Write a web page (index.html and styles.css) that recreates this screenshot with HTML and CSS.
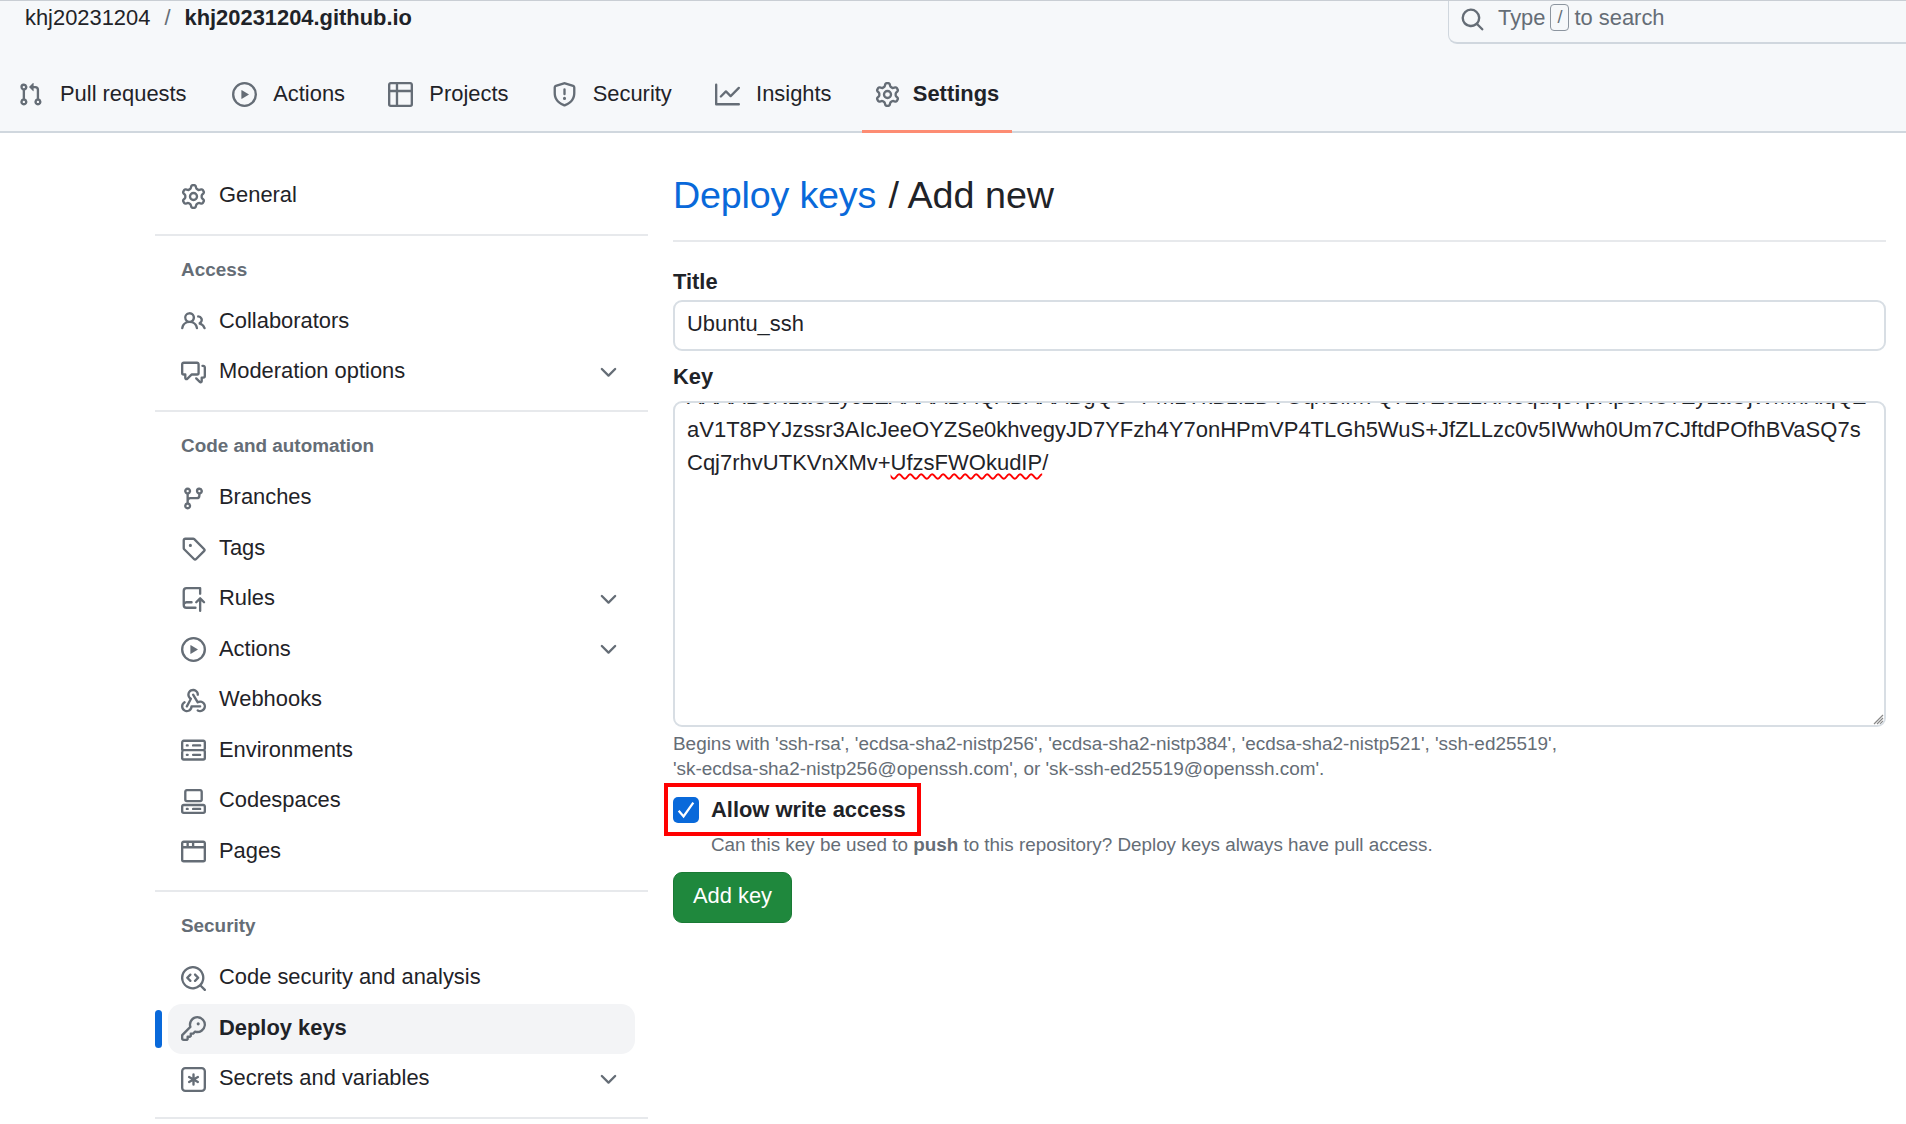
FILE: index.html
```html
<!DOCTYPE html>
<html lang="en">
<head>
    <meta charset="UTF-8">
    <meta name="viewport" content="width=device-width, initial-scale=1.0">
    <title>Add new deploy key</title>
    <link rel="stylesheet" href="styles.css">
</head>
<body>
    <svg class="defs" aria-hidden="true">
        <symbol id="i-gear" viewBox="0 0 16 16"><path d="M8 0a8.2 8.2 0 0 1 .701.031C9.444.095 9.99.645 10.16 1.29l.288 1.107c.018.066.079.158.212.224.231.114.454.243.668.386.123.082.233.09.299.071l1.103-.303c.644-.176 1.392.021 1.82.63.27.385.506.792.704 1.218.315.675.111 1.422-.364 1.891l-.814.806c-.049.048-.098.147-.088.294.016.257.016.515 0 .772-.01.147.038.246.088.294l.814.806c.475.469.679 1.216.364 1.891a7.977 7.977 0 0 1-.704 1.217c-.428.61-1.176.807-1.82.63l-1.102-.302c-.067-.019-.177-.011-.3.071a5.909 5.909 0 0 1-.668.386c-.133.066-.194.158-.211.224l-.29 1.106c-.168.646-.715 1.196-1.458 1.26a8.006 8.006 0 0 1-1.402 0c-.743-.064-1.289-.614-1.458-1.26l-.289-1.106c-.018-.066-.079-.158-.212-.224a5.738 5.738 0 0 1-.668-.386c-.123-.082-.233-.09-.299-.071l-1.103.303c-.644.176-1.392-.021-1.82-.63a8.12 8.12 0 0 1-.704-1.218c-.315-.675-.111-1.422.363-1.891l.815-.806c.05-.048.098-.147.088-.294a6.214 6.214 0 0 1 0-.772c.01-.147-.038-.246-.088-.294l-.815-.806C.635 6.045.431 5.298.746 4.623a7.92 7.92 0 0 1 .704-1.217c.428-.61 1.176-.807 1.82-.63l1.102.302c.067.019.177.011.3-.071.214-.143.437-.272.668-.386.133-.066.194-.158.211-.224l.29-1.106C6.009.645 6.556.095 7.299.03 7.53.01 7.764 0 8 0Zm-.571 1.525c-.036.003-.108.036-.137.146l-.289 1.105c-.147.561-.549.967-.998 1.189-.173.086-.34.183-.5.29-.417.278-.97.423-1.529.27l-1.103-.303c-.109-.03-.175.016-.195.045-.22.312-.412.644-.573.99-.014.031-.021.11.059.19l.815.806c.411.406.562.957.53 1.456a4.709 4.709 0 0 0 0 .582c.032.499-.119 1.05-.53 1.456l-.815.806c-.081.08-.073.159-.059.19.162.346.353.677.573.989.02.03.085.076.195.046l1.102-.303c.56-.153 1.113-.008 1.53.27.161.107.328.204.501.29.447.222.85.629.997 1.189l.289 1.105c.029.109.101.143.137.146a6.6 6.6 0 0 0 1.142 0c.036-.003.108-.036.137-.146l.289-1.105c.147-.561.549-.967.998-1.189.173-.086.34-.183.5-.29.417-.278.97-.423 1.529-.27l1.103.303c.109.029.175-.016.195-.045.22-.313.411-.644.573-.99.014-.031.021-.11-.059-.19l-.815-.806c-.411-.406-.562-.957-.53-1.456a4.709 4.709 0 0 0 0-.582c-.032-.499.119-1.05.53-1.456l.815-.806c.081-.08.073-.159.059-.19a6.464 6.464 0 0 0-.573-.989c-.02-.03-.085-.076-.195-.046l-1.102.303c-.56.153-1.113.008-1.53-.27a4.44 4.44 0 0 0-.501-.29c-.447-.222-.85-.629-.997-1.189l-.289-1.105c-.029-.11-.101-.143-.137-.146a6.6 6.6 0 0 0-1.142 0ZM11 8a3 3 0 1 1-6 0 3 3 0 0 1 6 0ZM9.5 8a1.5 1.5 0 1 0-3.001.001A1.5 1.5 0 0 0 9.5 8Z"/></symbol>
        <symbol id="i-pull" viewBox="0 0 16 16"><path d="M1.5 3.25a2.25 2.25 0 1 1 3 2.122v5.256a2.251 2.251 0 1 1-1.5 0V5.372A2.25 2.25 0 0 1 1.5 3.25Zm5.677-.177L9.573.677A.25.25 0 0 1 10 .854V2.5h1A2.5 2.5 0 0 1 13.5 5v5.628a2.251 2.251 0 1 1-1.5 0V5a1 1 0 0 0-1-1h-1v1.646a.25.25 0 0 1-.427.177L7.177 3.427a.25.25 0 0 1 0-.354ZM3.75 2.5a.75.75 0 1 0 0 1.5.75.75 0 0 0 0-1.5Zm0 9.5a.75.75 0 1 0 0 1.5.75.75 0 0 0 0-1.5Zm8.25.75a.75.75 0 1 0 1.5 0 .75.75 0 0 0-1.5 0Z"/></symbol>
        <symbol id="i-play" viewBox="0 0 16 16"><path d="M8 0a8 8 0 1 1 0 16A8 8 0 0 1 8 0ZM1.5 8a6.5 6.5 0 1 0 13 0 6.5 6.5 0 0 0-13 0Zm4.879-2.773 4.264 2.559a.25.25 0 0 1 0 .428l-4.264 2.559A.25.25 0 0 1 6 10.559V5.442a.25.25 0 0 1 .379-.215Z"/></symbol>
        <symbol id="i-table" viewBox="0 0 16 16"><path d="M0 1.75C0 .784.784 0 1.75 0h12.5C15.216 0 16 .784 16 1.75v12.5A1.75 1.75 0 0 1 14.25 16H1.75A1.75 1.75 0 0 1 0 14.25ZM6.5 6.5v8h7.75a.25.25 0 0 0 .25-.25V6.5Zm8-1.5V1.75a.25.25 0 0 0-.25-.25H6.5V5Zm-13 1.5v7.75c0 .138.112.25.25.25H5v-8ZM5 5V1.5H1.75a.25.25 0 0 0-.25.25V5Z"/></symbol>
        <symbol id="i-shield" viewBox="0 0 16 16"><path d="M7.467.133a1.748 1.748 0 0 1 1.066 0l5.25 1.68A1.75 1.75 0 0 1 15 3.48V7c0 1.566-.32 3.182-1.303 4.682-.983 1.498-2.585 2.813-5.032 3.855a1.697 1.697 0 0 1-1.33 0c-2.447-1.042-4.049-2.357-5.032-3.855C1.32 10.182 1 8.566 1 7V3.48a1.75 1.75 0 0 1 1.217-1.667Zm.61 1.429a.25.25 0 0 0-.153 0l-5.25 1.68a.25.25 0 0 0-.174.238V7c0 1.358.275 2.666 1.057 3.86.784 1.194 2.121 2.34 4.366 3.297a.196.196 0 0 0 .154 0c2.245-.956 3.582-2.104 4.366-3.298C13.225 9.666 13.5 8.36 13.5 7V3.48a.251.251 0 0 0-.174-.237l-5.25-1.68ZM8.75 4.75v3a.75.75 0 0 1-1.5 0v-3a.75.75 0 0 1 1.5 0ZM9 10.5a1 1 0 1 1-2 0 1 1 0 0 1 2 0Z"/></symbol>
        <symbol id="i-graph" viewBox="0 0 16 16"><path d="M1.5 1.75V13.5h13.75a.75.75 0 0 1 0 1.5H.75a.75.75 0 0 1-.75-.75V1.75a.75.75 0 0 1 1.5 0Zm14.28 2.53-5.25 5.25a.75.75 0 0 1-1.06 0L7 7.06 4.28 9.78a.751.751 0 0 1-1.042-.018.751.751 0 0 1-.018-1.042l3.25-3.25a.75.75 0 0 1 1.06 0L10 7.94l4.72-4.72a.751.751 0 0 1 1.042.018.751.751 0 0 1 .018 1.042Z"/></symbol>
        <symbol id="i-search" viewBox="0 0 16 16"><path d="M10.68 11.74a6 6 0 0 1-7.922-8.982 6 6 0 0 1 8.982 7.922l3.04 3.04a.749.749 0 0 1-.326 1.275.749.749 0 0 1-.734-.215ZM11.5 7a4.499 4.499 0 1 0-8.997 0A4.499 4.499 0 0 0 11.5 7Z"/></symbol>
        <symbol id="i-people" viewBox="0 0 16 16"><path d="M2 5.5a3.5 3.5 0 1 1 5.898 2.549 5.508 5.508 0 0 1 3.034 4.084.75.75 0 1 1-1.482.235 4 4 0 0 0-7.9 0 .75.75 0 0 1-1.482-.236A5.507 5.507 0 0 1 3.102 8.05 3.493 3.493 0 0 1 2 5.5ZM11 4a3.001 3.001 0 0 1 2.22 5.018 5.01 5.01 0 0 1 2.56 3.012.749.749 0 0 1-.885.954.752.752 0 0 1-.549-.514 3.507 3.507 0 0 0-2.522-2.372.75.75 0 0 1-.574-.73v-.352a.75.75 0 0 1 .416-.672A1.5 1.5 0 0 0 11 5.5.75.75 0 0 1 11 4Zm-5.5-.5a2 2 0 1 0-.001 3.999A2 2 0 0 0 5.5 3.5Z"/></symbol>
        <symbol id="i-discuss" viewBox="0 0 16 16"><path d="M1.75 1h8.5c.966 0 1.75.784 1.75 1.75v5.5A1.75 1.75 0 0 1 10.25 10H7.061l-2.574 2.573A1.458 1.458 0 0 1 2 11.543V10h-.25A1.75 1.75 0 0 1 0 8.25v-5.5C0 1.784.784 1 1.75 1ZM1.5 2.75v5.5c0 .138.112.25.25.25h1a.75.75 0 0 1 .75.75v2.19l2.72-2.72a.749.749 0 0 1 .53-.22h3.5a.25.25 0 0 0 .25-.25v-5.5a.25.25 0 0 0-.25-.25h-8.5a.25.25 0 0 0-.25.25Zm13 2a.25.25 0 0 0-.25-.25h-.5a.75.75 0 0 1 0-1.5h.5c.966 0 1.75.784 1.75 1.75v5.5A1.75 1.75 0 0 1 14.25 12H14v1.543a1.458 1.458 0 0 1-2.487 1.03L9.22 12.28a.749.749 0 0 1 .326-1.275.749.749 0 0 1 .734.215l2.22 2.22v-2.19a.75.75 0 0 1 .75-.75h1a.25.25 0 0 0 .25-.25Z"/></symbol>
        <symbol id="i-branch" viewBox="0 0 16 16"><path d="M9.5 3.25a2.25 2.25 0 1 1 3 2.122V6A2.5 2.5 0 0 1 10 8.5H6a1 1 0 0 0-1 1v1.128a2.251 2.251 0 1 1-1.5 0V5.372a2.25 2.25 0 1 1 1.5 0v1.836A2.493 2.493 0 0 1 6 7h4a1 1 0 0 0 1-1v-.628A2.25 2.25 0 0 1 9.5 3.25Zm-6 0a.75.75 0 1 0 1.5 0 .75.75 0 0 0-1.5 0Zm8.25-.75a.75.75 0 1 0 0 1.5.75.75 0 0 0 0-1.5ZM4.25 12a.75.75 0 1 0 0 1.5.75.75 0 0 0 0-1.5Z"/></symbol>
        <symbol id="i-tag" viewBox="0 0 16 16"><path d="M1 7.775V2.75C1 1.784 1.784 1 2.75 1h5.025c.464 0 .91.184 1.238.513l6.25 6.25a1.75 1.75 0 0 1 0 2.474l-5.026 5.026a1.75 1.75 0 0 1-2.474 0l-6.25-6.25A1.752 1.752 0 0 1 1 7.775Zm1.5 0c0 .066.026.13.073.177l6.25 6.25a.25.25 0 0 0 .354 0l5.025-5.025a.25.25 0 0 0 0-.354l-6.25-6.25a.25.25 0 0 0-.177-.073H2.75a.25.25 0 0 0-.25.25ZM6 5a1 1 0 1 1 0 2 1 1 0 0 1 0-2Z"/></symbol>
        <symbol id="i-push" viewBox="0 0 16 16"><path d="M1 2.5A2.5 2.5 0 0 1 3.5 0h8.75a.75.75 0 0 1 .75.75v3.5a.75.75 0 0 1-1.5 0V1.5h-8a1 1 0 0 0-1 1v6.708A2.493 2.493 0 0 1 3.5 9h3.25a.75.75 0 0 1 0 1.5H3.5a1 1 0 0 0 0 2h5.75a.75.75 0 0 1 0 1.5H3.5A2.5 2.5 0 0 1 1 11.5Zm13.23 7.79h-.001l-1.224-1.224v6.184a.75.75 0 0 1-1.5 0V9.066L10.28 10.29a.75.75 0 0 1-1.06-1.061l2.505-2.504a.75.75 0 0 1 1.06 0L15.29 9.23a.751.751 0 0 1-.018 1.042.751.751 0 0 1-1.042.018Z"/></symbol>
        <symbol id="i-webhook" viewBox="0 0 16 16"><path d="M5.5 4.25a2.25 2.25 0 0 1 4.5 0 .75.75 0 0 0 1.5 0 3.75 3.75 0 1 0-6.14 2.889l-2.272 4.258a.75.75 0 0 0 1.324.706L7 7.25a.75.75 0 0 0-.309-1.015A2.25 2.25 0 0 1 5.5 4.25Z"/><path d="M7.364 3.607a.75.75 0 0 1 1.03.257l2.608 4.349a3.75 3.75 0 1 1-.628 6.785.75.75 0 0 1 .752-1.299 2.25 2.25 0 1 0-.033-3.88.75.75 0 0 1-1.03-.256L7.107 4.636a.75.75 0 0 1 .257-1.03Z"/><path d="M2.9 8.776A.75.75 0 0 1 2.625 9.8 2.25 2.25 0 1 0 6 11.75a.75.75 0 0 1 .75-.751h5.5a.75.75 0 0 1 0 1.5H7.425a3.751 3.751 0 1 1-5.55-3.998.75.75 0 0 1 1.024.274Z"/></symbol>
        <symbol id="i-server" viewBox="0 0 16 16"><path d="M1.75 1h12.5c.966 0 1.75.784 1.75 1.75v4c0 .372-.116.717-.314 1 .198.283.314.628.314 1v4a1.75 1.75 0 0 1-1.75 1.75H1.75A1.75 1.75 0 0 1 0 13.25v-4c0-.372.116-.717.314-1a1.739 1.739 0 0 1-.314-1v-4C0 1.784.784 1 1.75 1ZM1.5 2.75v4c0 .138.112.25.25.25h12.5a.25.25 0 0 0 .25-.25v-4a.25.25 0 0 0-.25-.25H1.75a.25.25 0 0 0-.25.25Zm.25 5.75a.25.25 0 0 0-.25.25v4c0 .138.112.25.25.25h12.5a.25.25 0 0 0 .25-.25v-4a.25.25 0 0 0-.25-.25ZM7 4.75A.75.75 0 0 1 7.75 4h4.5a.75.75 0 0 1 0 1.5h-4.5A.75.75 0 0 1 7 4.75ZM7.75 10h4.5a.75.75 0 0 1 0 1.5h-4.5a.75.75 0 0 1 0-1.5ZM3 4.75A.75.75 0 0 1 3.75 4h.5a.75.75 0 0 1 0 1.5h-.5A.75.75 0 0 1 3 4.75ZM3.75 10h.5a.75.75 0 0 1 0 1.5h-.5a.75.75 0 0 1 0-1.5Z"/></symbol>
        <symbol id="i-codespaces" viewBox="0 0 16 16"><path d="M0 11.25c0-.966.784-1.75 1.75-1.75h12.5c.966 0 1.75.784 1.75 1.75v3A1.75 1.75 0 0 1 14.25 16H1.75A1.75 1.75 0 0 1 0 14.25Zm2-9.5C2 .784 2.784 0 3.75 0h8.5C13.216 0 14 .784 14 1.75v5a1.75 1.75 0 0 1-1.75 1.75h-8.5A1.75 1.75 0 0 1 2 6.75Zm1.75-.25a.25.25 0 0 0-.25.25v5c0 .138.112.25.25.25h8.5a.25.25 0 0 0 .25-.25v-5a.25.25 0 0 0-.25-.25Zm-2 9.5a.25.25 0 0 0-.25.25v3c0 .138.112.25.25.25h12.5a.25.25 0 0 0 .25-.25v-3a.25.25 0 0 0-.25-.25Z"/><path d="M7 12.75a.75.75 0 0 1 .75-.75h4.5a.75.75 0 0 1 0 1.5h-4.5a.75.75 0 0 1-.75-.75Zm-4 0a.75.75 0 0 1 .75-.75h.5a.75.75 0 0 1 0 1.5h-.5a.75.75 0 0 1-.75-.75Z"/></symbol>
        <symbol id="i-browser" viewBox="0 0 16 16"><path d="M0 2.75C0 1.784.784 1 1.75 1h12.5c.966 0 1.75.784 1.75 1.75v10.5A1.75 1.75 0 0 1 14.25 15H1.75A1.75 1.75 0 0 1 0 13.25ZM14.5 6h-13v7.25c0 .138.112.25.25.25h12.5a.25.25 0 0 0 .25-.25Zm-6-3.5v2h6V2.75a.25.25 0 0 0-.25-.25ZM5 2.5v2h2v-2Zm-3.25 0a.25.25 0 0 0-.25.25V4.5h2v-2Z"/></symbol>
        <symbol id="i-codescan" viewBox="0 0 16 16"><path d="M8.47 4.97a.75.75 0 0 0 0 1.06L9.94 7.5 8.47 8.97a.75.75 0 1 0 1.06 1.06l2-2a.75.75 0 0 0 0-1.06l-2-2a.75.75 0 0 0-1.06 0ZM6.53 6.03a.75.75 0 0 0-1.06-1.06l-2 2a.75.75 0 0 0 0 1.06l2 2a.75.75 0 1 0 1.06-1.06L5.06 7.5l1.47-1.47Z"/><path d="M12.246 13.307a7.501 7.501 0 1 1 1.06-1.06l2.474 2.473a.749.749 0 0 1-.326 1.275.749.749 0 0 1-.734-.215ZM1.5 7.5a6.002 6.002 0 0 0 3.608 5.504 6.002 6.002 0 0 0 6.486-1.117.748.748 0 0 1 .292-.293A6 6 0 1 0 1.5 7.5Z"/></symbol>
        <symbol id="i-key" viewBox="0 0 16 16"><path d="M10.5 0a5.499 5.499 0 1 1-1.288 10.848l-.932.932a.749.749 0 0 1-.53.22H7v.75a.749.749 0 0 1-.22.53l-.5.5a.749.749 0 0 1-.53.22H5v.75a.749.749 0 0 1-.22.53l-.5.5a.749.749 0 0 1-.53.22h-2A1.75 1.75 0 0 1 0 14.25v-2c0-.199.079-.389.22-.53l4.932-4.932A5.5 5.5 0 0 1 10.5 0Zm-4 5.5c-.001.431.069.86.205 1.269a.75.75 0 0 1-.181.768L1.5 12.56v1.69c0 .138.112.25.25.25h1.69l.06-.06v-1.19a.75.75 0 0 1 .75-.75h1.19l.06-.06v-1.19a.75.75 0 0 1 .75-.75h1.19l1.023-1.025a.75.75 0 0 1 .768-.18A4 4 0 1 0 6.5 5.5ZM11 6a1 1 0 1 1 0-2 1 1 0 0 1 0 2Z"/></symbol>
        <symbol id="i-asterisk" viewBox="0 0 16 16"><path d="M0 2.75A2.75 2.75 0 0 1 2.75 0h10.5A2.75 2.75 0 0 1 16 2.75v10.5A2.75 2.75 0 0 1 13.25 16H2.75A2.75 2.75 0 0 1 0 13.25ZM2.75 1.5c-.69 0-1.25.56-1.25 1.25v10.5c0 .69.56 1.25 1.25 1.25h10.5c.69 0 1.25-.56 1.25-1.25V2.75c0-.69-.56-1.25-1.25-1.25Z"/><path d="M8 4a.75.75 0 0 1 .75.75V6.7l1.69-.975a.75.75 0 0 1 .75 1.3L9.5 8l1.69.976a.75.75 0 0 1-.75 1.298L8.75 9.3v1.951a.75.75 0 0 1-1.5 0V9.299l-1.69.976a.75.75 0 0 1-.75-1.3L6.5 8l-1.69-.975a.75.75 0 0 1 .75-1.3l1.69.976V4.75A.75.75 0 0 1 8 4Z"/></symbol>
        <symbol id="i-chevron" viewBox="0 0 16 16"><path d="M12.78 5.22a.749.749 0 0 1 0 1.06l-4.25 4.25a.749.749 0 0 1-1.06 0L3.22 6.28a.749.749 0 1 1 1.06-1.06L8 8.939l3.72-3.719a.749.749 0 0 1 1.06 0Z"/></symbol>
    </svg>

    <header class="repo-head">
        <div class="head-top">
            <div class="crumbs">
                <a href="#">khj20231204</a>
                <span class="crumb-sep">/</span>
                <a href="#" class="crumb-repo">khj20231204.github.io</a>
            </div>
            <div class="search">
                <svg class="icon"><use href="#i-search"/></svg>
                <span>Type</span><kbd>/</kbd><span>to search</span>
            </div>
        </div>
        <nav class="tabs">
            <a href="#" class="tab"><svg class="icon"><use href="#i-pull"/></svg>Pull requests</a>
            <a href="#" class="tab"><svg class="icon"><use href="#i-play"/></svg>Actions</a>
            <a href="#" class="tab"><svg class="icon"><use href="#i-table"/></svg>Projects</a>
            <a href="#" class="tab"><svg class="icon"><use href="#i-shield"/></svg>Security</a>
            <a href="#" class="tab"><svg class="icon"><use href="#i-graph"/></svg>Insights</a>
            <a href="#" class="tab tab-active"><svg class="icon"><use href="#i-gear"/></svg>Settings</a>
        </nav>
    </header>

    <div class="layout">
        <aside class="side">
            <ul class="side-list">
                <li class="side-item"><svg class="icon"><use href="#i-gear"/></svg>General</li>
            </ul>
            <div class="side-group">
                <h3 class="side-title">Access</h3>
                <ul class="side-list">
                    <li class="side-item"><svg class="icon"><use href="#i-people"/></svg>Collaborators</li>
                    <li class="side-item"><svg class="icon"><use href="#i-discuss"/></svg>Moderation options<svg class="icon chev"><use href="#i-chevron"/></svg></li>
                </ul>
            </div>
            <div class="side-group side-group-wide">
                <h3 class="side-title">Code and automation</h3>
                <ul class="side-list">
                    <li class="side-item"><svg class="icon"><use href="#i-branch"/></svg>Branches</li>
                    <li class="side-item"><svg class="icon"><use href="#i-tag"/></svg>Tags</li>
                    <li class="side-item"><svg class="icon"><use href="#i-push"/></svg>Rules<svg class="icon chev"><use href="#i-chevron"/></svg></li>
                    <li class="side-item"><svg class="icon"><use href="#i-play"/></svg>Actions<svg class="icon chev"><use href="#i-chevron"/></svg></li>
                    <li class="side-item"><svg class="icon"><use href="#i-webhook"/></svg>Webhooks</li>
                    <li class="side-item"><svg class="icon"><use href="#i-server"/></svg>Environments</li>
                    <li class="side-item"><svg class="icon"><use href="#i-codespaces"/></svg>Codespaces</li>
                    <li class="side-item"><svg class="icon"><use href="#i-browser"/></svg>Pages</li>
                </ul>
            </div>
            <div class="side-group">
                <h3 class="side-title">Security</h3>
                <ul class="side-list">
                    <li class="side-item"><svg class="icon"><use href="#i-codescan"/></svg>Code security and analysis</li>
                    <li class="side-item side-current"><svg class="icon"><use href="#i-key"/></svg>Deploy keys</li>
                    <li class="side-item"><svg class="icon"><use href="#i-asterisk"/></svg>Secrets and variables<svg class="icon chev"><use href="#i-chevron"/></svg></li>
                </ul>
            </div>
            <div class="side-group"></div>
        </aside>

        <main class="content">
            <h2 class="page-title"><a href="#">Deploy keys</a> / Add new</h2>
            <form>
                <label class="field-label">Title</label>
                <div class="input">Ubuntu_ssh</div>

                <label class="field-label">Key</label>
                <div class="key-box">
                    <div class="key-text">
                        <div class="key-line">AAAAB3NzaC1yc2EAAAADAQABAAABgQC+Pm1YkBzIzDVGqxSim7Q7Z7Z6Z1KN5qdqc7pRpoRU7Zy1aOjWMnXiqQZ</div>
                        <div class="key-line">aV1T8PYJzssr3AIcJeeOYZSe0khvegyJD7YFzh4Y7onHPmVP4TLGh5WuS+JfZLLzc0v5IWwh0Um7CJftdPOfhBVaSQ7s</div>
                        <div class="key-line">Cqj7rhvUTKVnXMv+<span class="typo">UfzsFWOkudIP</span>/</div>
                    </div>
                    <svg class="grip" viewBox="0 0 12 12"><path d="M11 2 2 11M11 5 5 11M11 8 8 11"/></svg>
                </div>
                <p class="hint">Begins with 'ssh-rsa', 'ecdsa-sha2-nistp256', 'ecdsa-sha2-nistp384', 'ecdsa-sha2-nistp521', 'ssh-ed25519',<br>'sk-ecdsa-sha2-nistp256@openssh.com', or 'sk-ssh-ed25519@openssh.com'.</p>

                <div class="write-box">
                    <span class="check"><svg viewBox="0 0 16 16"><path d="M3.5 8.5 6.5 12 12.5 3.5"/></svg></span>
                    <strong>Allow write access</strong>
                </div>
                <p class="note">Can this key be used to <b>push</b> to this repository? Deploy keys always have pull access.</p>

                <button type="button" class="add-btn">Add key</button>
            </form>
        </main>
    </div>
</body>
</html>
```
FILE: styles.css
```css
* {
    box-sizing: border-box;
}
html, body {
    height: 100%;
}
body {
    margin: 0;
    height: 1124px;
    overflow: hidden;
    font-family: "Liberation Sans", Arial, sans-serif;
    font-size: 21.9px;
    color: #1f2328;
    background: #fff;
}
a {
    color: inherit;
    text-decoration: none;
}
ul {
    list-style: none;
    margin: 0;
    padding: 0;
}
.defs {
    display: none;
}
.icon {
    width: 25px;
    height: 25px;
    flex: none;
    fill: #656d76;
}

.repo-head {
    height: 133px;
    background: #f6f8fa;
    border-top: 1px solid #c9ced4;
    border-bottom: 2px solid #d0d7de;
}
.head-top {
    display: flex;
    justify-content: space-between;
    height: 43px;
}
.crumbs {
    display: flex;
    gap: 14px;
    padding: 3px 0 0 25px;
    line-height: 28px;
}
.crumb-sep {
    color: #656d76;
}
.crumb-repo {
    font-weight: 700;
}
.search {
    display: flex;
    align-items: center;
    width: 458px;
    height: 43px;
    padding: 0 0 8px 11px;
    color: #656d76;
    border-left: 1px solid #d0d7de;
    border-bottom: 2px solid #d0d7de;
    border-bottom-left-radius: 9px;
}
.search .icon {
    margin-right: 13px;
    margin-top: 4px;
}
.search kbd {
    display: inline-flex;
    align-items: center;
    justify-content: center;
    width: 19px;
    height: 27px;
    margin: 0 5px;
    font-family: inherit;
    font-size: 18px;
    border: 1px solid #8c959f;
    border-radius: 4px;
}
.tabs {
    display: flex;
    gap: 17.3px;
    height: 87px;
    padding-left: 5px;
}
.tab {
    display: flex;
    align-items: center;
    gap: 16px;
    padding: 14px 13px 0;
    height: 89px;
    border-bottom: 3px solid transparent;
}
.tab:first-child {
    gap: 17px;
    margin-right: 2.4px;
}
.tab-active {
    gap: 13px;
    font-weight: 700;
    border-bottom-color: #fd8c73;
}

.layout {
    display: flex;
    padding-left: 155px;
}
.side {
    width: 493px;
    flex: none;
    padding-top: 38px;
}
.side-group {
    margin-top: 12px;
    padding-top: 16px;
    border-top: 2px solid #e7e9ec;
}
.side-group-wide {
    margin-top: 12.5px;
}
.side-group-wide + .side-group {
    margin-top: 13px;
}
.side-title {
    margin: 6px 0 15px 26px;
    font-size: 18.9px;
    line-height: 24px;
    font-weight: 700;
    color: #656d76;
}
.side-item {
    position: relative;
    display: flex;
    align-items: center;
    gap: 13px;
    width: 467px;
    height: 50.5px;
    margin-left: 13px;
    padding: 0 14px 2px 13px;
    border-radius: 14px;
}
.side-item .icon {
    margin-top: 2px;
}
.side-item .chev {
    margin-left: auto;
}
.side-current {
    font-weight: 700;
    background: #f3f4f6;
}
.side-current::before {
    content: "";
    position: absolute;
    left: -13px;
    top: 6px;
    width: 7px;
    height: 38px;
    background: #0969da;
    border-radius: 4px;
}

.content {
    width: 1213px;
    margin-left: 25px;
    padding-top: 39px;
}
.page-title {
    margin: 0 0 23px;
    padding-bottom: 22px;
    font-size: 37.7px;
    line-height: 46px;
    font-weight: 400;
    border-bottom: 2px solid #e7e9ec;
}
.page-title a {
    margin-right: 2px;
    letter-spacing: -.2px;
    color: #0969da;
}
.field-label {
    display: block;
    padding-bottom: 1px;
    font-weight: 700;
    line-height: 34px;
}
.input {
    height: 51px;
    margin-bottom: 9px;
    padding: 0 12px;
    line-height: 44px;
    border: 2px solid #d8dee4;
    border-radius: 9px;
}
.key-box {
    position: relative;
    height: 326px;
    margin-top: 6px;
    padding: 0 12px;
    overflow: hidden;
    border: 2px solid #d8dee4;
    border-radius: 9px;
}
.key-text {
    margin-top: -23px;
    font-size: 22px;
    line-height: 33px;
}
.key-line {
    white-space: nowrap;
}
.typo {
    text-decoration: underline wavy #f00 1.5px;
    text-underline-offset: 3px;
}
.grip {
    position: absolute;
    right: 0;
    bottom: 0;
    width: 12px;
    height: 12px;
    fill: none;
    stroke: #888;
    stroke-width: 1.2;
}
.hint {
    margin: 4px 0 0;
    font-size: 18.93px;
    line-height: 25px;
    color: #656d76;
}
.write-box {
    display: inline-flex;
    align-items: center;
    gap: 12px;
    height: 53px;
    margin: 2px 0 0 -9px;
    padding-left: 5px;
    padding-right: 11px;
    border: 4px solid #f00;
}
.check {
    display: flex;
    width: 26px;
    height: 26px;
    background: #0969da;
    border-radius: 5px;
}
.check svg {
    fill: none;
    stroke: #fff;
    stroke-width: 1.4;
}
.note {
    margin: 0 0 0 38px;
    font-size: 18.85px;
    line-height: 18px;
    color: #656d76;
}
.add-btn {
    display: block;
    width: 119px;
    height: 51px;
    margin-top: 18px;
    padding: 0 0 3px;
    font-family: inherit;
    font-size: 21.9px;
    color: #fff;
    background: #1f883d;
    border: 1px solid #1a7a35;
    border-radius: 9px;
}
```
